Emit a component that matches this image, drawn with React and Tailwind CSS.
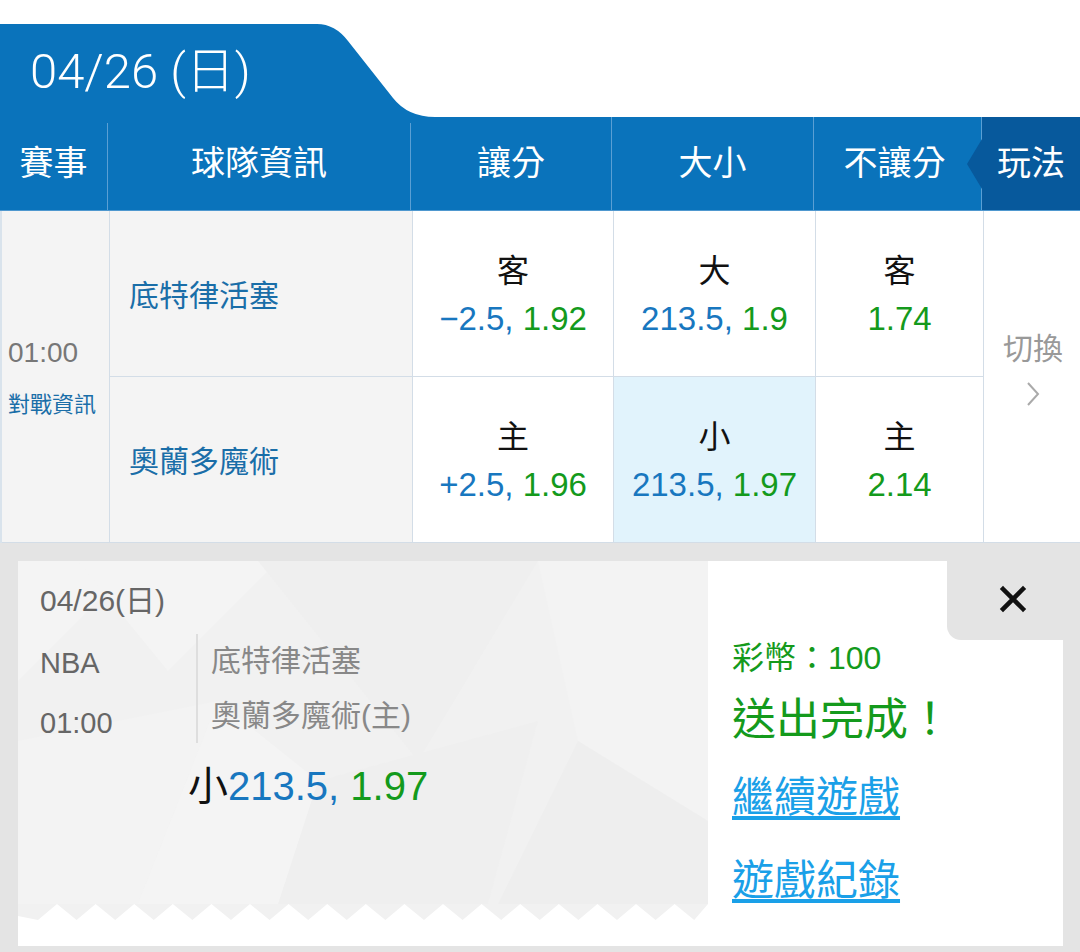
import React from "react";

const FONT = { fontFamily: '"Liberation Sans", "Noto Sans CJK TC", sans-serif' };

function Zigzag() {
  const period = 38.6;
  const pts = ["0,0", "0,12"];
  for (let k = 0; k < 20; k++) {
    const v = 20 + k * period;
    const p = 39 + k * period;
    if (v > 690) break;
    pts.push(`${v.toFixed(1)},16`);
    pts.push(`${Math.min(p, 690).toFixed(1)},0`);
  }
  pts.push("690,0");
  return (
    <svg width="690" height="16" viewBox="0 0 690 16" className="block">
      <rect width="690" height="16" fill="#ffffff" />
      <polygon points={pts.join(" ")} fill="#f1f1f1" />
    </svg>
  );
}

function GeoBg() {
  return (
    <svg className="absolute inset-0" width="690" height="343" viewBox="0 0 690 343">
      <polygon points="0,0 120,0 0,120" fill="#f4f4f4" />
      <polygon points="60,0 260,0 150,110" fill="#f4f4f4" />
      <polygon points="240,0 520,0 400,200" fill="#efefef" />
      <polygon points="0,180 200,140 120,343 0,343" fill="#f3f3f3" />
      <polygon points="300,220 520,160 470,343 260,343" fill="#efefef" />
      <polygon points="520,0 690,0 690,260 560,180" fill="#f3f3f3" />
      <polygon points="560,180 690,260 690,343 480,343" fill="#eeeeee" />
      <polygon points="120,343 200,140 300,220 260,343" fill="#f4f4f4" />
    </svg>
  );
}

function OddsCell({ label, a, b, highlight }) {
  return (
    <div
      className={`flex flex-col items-center justify-center border-r border-b border-[#d3dde7] pt-[3px] ${
        highlight ? "bg-[#e1f3fc]" : "bg-white"
      }`}
    >
      <div className="text-[32px] leading-[48px] text-[#111]">{label}</div>
      <div className="text-[33px] leading-[48px] whitespace-nowrap">
        {a !== null && <span className="text-[#1877bf]">{a}, </span>}
        <span className="text-[#149a1c]">{b}</span>
      </div>
    </div>
  );
}

export default function App() {
  return (
    <div className="w-[1080px] h-[952px] bg-white overflow-hidden flex flex-col" style={FONT}>
      <div className="h-[24px]" />
      {/* tab */}
      <div className="flex h-[93px]">
        <div className="w-[315px] bg-[#0a73bb] flex items-center pl-[30px] pt-[2px]">
          <span
            className="text-white text-[49px] leading-none whitespace-nowrap font-light"
            style={{ fontFamily: 'Roboto, "Noto Sans CJK TC", sans-serif' }}
          >
            04/26 (日)
          </span>
        </div>
        <svg width="125" height="93" viewBox="0 0 125 93" className="block">
          <path d="M0 0 H2 Q20 0 33 17 L78 74 Q93 93 120 93 H0 Z" fill="#0a73bb" />
        </svg>
      </div>
      {/* header row */}
      <div className="grid grid-cols-[108px_303px_201px_202px_168px_98px] h-[94px] bg-[#0a73bb] text-white text-[34px] border-b border-[#4f98cf]">
        <div className="flex items-center justify-center border-r border-[#5a9fd4] mt-[6px] pb-[6px]">賽事</div>
        <div className="flex items-center justify-center border-r border-[#5a9fd4] mt-[6px] pb-[6px]">球隊資訊</div>
        <div className="flex items-center justify-center border-r border-[#5a9fd4]">讓分</div>
        <div className="flex items-center justify-center border-r border-[#5a9fd4]">大小</div>
        <div className="flex items-center justify-center border-r border-[#5a9fd4] pr-[6px]">不讓分</div>
        <div className="relative flex items-center justify-center bg-[#07599c]">
          <svg className="absolute left-[-15px] top-[22px]" width="15" height="50" viewBox="0 0 15 50">
            <polygon points="15,0 0,25 15,50" fill="#07599c" />
          </svg>
          玩法
        </div>
      </div>
      {/* body */}
      <div className="grid grid-cols-[108px_303px_201px_202px_168px_98px] grid-rows-[166px_166px] border-l-[2px] border-[#d9e3ec]">
        <div className="row-span-2 bg-[#f4f4f4] border-r border-b border-[#d3dde7] flex flex-col justify-center pl-[6px] pt-[3px]">
          <div className="text-[28px] leading-[34px] text-[#777]">01:00</div>
          <div className="text-[22px] leading-[30px] text-[#1a6ea8] mt-[20px] whitespace-nowrap">對戰資訊</div>
        </div>
        <div className="bg-[#f4f4f4] border-r border-b border-[#d3dde7] flex items-center pl-[19px] pt-[3px] text-[30px] text-[#1a6ea8]">
          底特律活塞
        </div>
        <OddsCell label="客" a="−2.5" b="1.92" />
        <OddsCell label="大" a="213.5" b="1.9" />
        <OddsCell label="客" a={null} b="1.74" />
        <div className="row-span-2 bg-white border-b border-[#d3dde7] flex flex-col items-center justify-center pb-[16px]">
          <div className="text-[30px] leading-[36px] text-[#999]">切換</div>
          <svg className="mt-[14px]" width="14" height="26" viewBox="0 0 14 26">
            <path d="M2 2 L12 13 L2 24" fill="none" stroke="#aaaaaa" strokeWidth="2" />
          </svg>
        </div>
        <div className="bg-[#f4f4f4] border-r border-b border-[#d3dde7] flex items-center pl-[19px] pt-[3px] text-[30px] text-[#1a6ea8]">
          奧蘭多魔術
        </div>
        <OddsCell label="主" a="+2.5" b="1.96" />
        <OddsCell label="小" a="213.5" b="1.97" highlight />
        <OddsCell label="主" a={null} b="2.14" />
      </div>
      {/* bottom panel */}
      <div className="flex-1 bg-[#e4e4e4] pl-[18px] pr-[17px] pt-[18px]">
        <div className="flex h-[385px]">
          <div className="w-[690px] flex flex-col">
            <div className="relative flex-1 bg-[#f1f1f1]">
              <GeoBg />
              <div className="relative pl-[22px] pt-[20px]">
                <div className="text-[30px] leading-[40px] text-[#666]">04/26(日)</div>
                <div className="flex mt-[13px]">
                  <div className="w-[156px] pt-[9px] text-[29px] leading-[40px] text-[#666]">
                    <div>NBA</div>
                    <div className="mt-[20px]">01:00</div>
                  </div>
                  <div className="h-[109px] border-l-[2px] border-[#dedede] pl-[13px] pt-[7px] text-[30px] leading-[40px] text-[#888]">
                    <div>底特律活塞</div>
                    <div className="mt-[15px]">奧蘭多魔術(主)</div>
                  </div>
                </div>
                <div className="ml-[148px] mt-[19px] text-[40px] leading-[48px] whitespace-nowrap">
                  <span className="text-[#111]">小</span>
                  <span className="text-[#1877bf]">213.5, </span>
                  <span className="text-[#149a1c]">1.97</span>
                </div>
              </div>
            </div>
            <Zigzag />
            <div className="h-[26px] bg-white" />
          </div>
          <div className="flex-1 bg-white flex flex-col">
            <div className="self-end w-[116px] h-[79px] bg-[#e4e4e4] rounded-bl-[14px] flex items-center justify-center pl-[16px] pb-[4px]">
              <svg width="28" height="28" viewBox="0 0 28 28">
                <path d="M4 4 L24 24 M24 4 L4 24" stroke="#111" strokeWidth="4.5" strokeLinecap="square" />
              </svg>
            </div>
            <div className="pl-[24px]">
              <div className="text-[32px] leading-[36px] text-[#149a1c] whitespace-nowrap">彩幣：100</div>
              <div className="mt-[16px] text-[44px] leading-[56px] text-[#149a1c] whitespace-nowrap">送出完成！</div>
              <div className="mt-[22px] text-[42px] leading-[56px] text-[#1aa0e8] underline underline-offset-[4px] whitespace-nowrap">
                繼續遊戲
              </div>
              <div className="mt-[27px] text-[42px] leading-[56px] text-[#1aa0e8] underline underline-offset-[4px] whitespace-nowrap">
                遊戲紀錄
              </div>
            </div>
          </div>
        </div>
      </div>
    </div>
  );
}
